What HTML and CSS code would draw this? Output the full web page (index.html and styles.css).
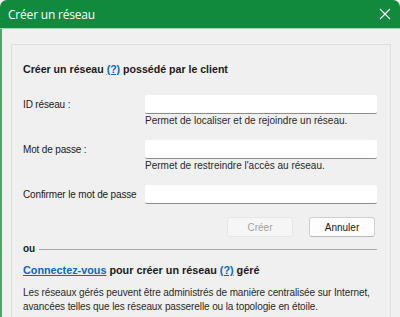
FILE: index.html
```html
<!DOCTYPE html>
<html>
<head>
    <title>Créer un réseau</title>
    <meta charset="UTF-8">
    <link rel="stylesheet" href="styles.css">
</head>
<body>
    <div class="window">
        <div class="titlebar">
            <span class="title">Créer un réseau</span>
            <svg class="close" width="12" height="12" viewBox="0 0 12 12">
                <path d="M1 1 L11 11 M11 1 L1 11" stroke="#fff" stroke-width="1.2" fill="none"/>
            </svg>
        </div>
        <div class="body">
            <div class="panel">
                <h3 class="heading">Créer un réseau <a href="#">(?)</a> possédé par le client</h3>

                <!-- formulaire réseau privé -->
                <div class="form-row first">
                    <label>ID réseau :</label>
                    <input type="text" id="networkId">
                </div>
                <div class="hint">Permet de localiser et de rejoindre un réseau.</div>
                <div class="form-row">
                    <label>Mot de passe :</label>
                    <input type="password" id="password">
                </div>
                <div class="hint">Permet de restreindre l'accès au réseau.</div>
                <div class="form-row">
                    <label>Confirmer le mot de passe</label>
                    <input type="password" id="confirm">
                </div>
                <div class="actions">
                    <button class="btn" disabled>Créer</button>
                    <button class="btn">Annuler</button>
                </div>

                <div class="separator"><span>ou</span><hr></div>

                <p class="managed"><a href="#">Connectez-vous</a> pour créer un réseau <a href="#">(?)</a> géré</p>
                <p class="desc">Les réseaux gérés peuvent être administrés de manière centralisée sur Internet,<br>avancées telles que les réseaux passerelle ou la topologie en étoile.</p>
            </div>
        </div>
    </div>
</body>
</html>
```

FILE: styles.css
```css
html, body {
    margin: 0;
    padding: 0;
    overflow: hidden;
}
body {
    font-family: "Liberation Sans", Arial, sans-serif;
    font-size: 10px;
    color: #1a1a1a;
    background-color: #f0f0f0;
}
.window {
    width: 400px;
    height: 317px;
    overflow: hidden;
}
.titlebar {
    height: 28px;
    background-color: #118a3e;
    border-radius: 7px 7px 0 0;
    border-bottom: 1px solid #9fd4b0;
    display: flex;
    align-items: center;
    justify-content: space-between;
    padding: 0 9px 0 8px;
}
.title {
    color: #fff;
    font-family: "Open Sans", sans-serif;
    font-size: 12px;
    letter-spacing: -0.2px;
}
.close {
    display: block;
}
.body {
    height: 288px;
    border-left: 2px solid #3fae68;
    padding: 15px 9px 0 9px;
    box-sizing: border-box;
}
.panel {
    border: 1px solid #dedede;
    border-bottom: none;
    height: 300px;
    padding: 17px 13px 0 11px;
    box-sizing: border-box;
}
.heading {
    margin: 0;
    font-size: 10.6px;
    line-height: 14px;
    font-weight: bold;
}
a {
    color: #0a66c8;
    text-decoration: underline;
}
.form-row {
    display: flex;
    align-items: center;
    margin-top: 13px;
}
.form-row.first {
    margin-top: 19px;
}
.form-row label {
    width: 122px;
    flex-shrink: 0;
    letter-spacing: -0.15px;
}
.form-row input {
    flex: 1;
    height: 19px;
    box-sizing: border-box;
    border: none;
    border-bottom: 1px solid #8c8c8c;
    background-color: #fff;
    border-radius: 2px;
    padding: 0 4px;
}
.hint {
    margin-left: 122px;
    margin-top: 1px;
    line-height: 12px;
    color: #2a2a2a;
}
.actions {
    display: flex;
    justify-content: flex-end;
    gap: 16px;
    margin-top: 13px;
    padding-right: 2px;
}
.btn {
    width: 66px;
    height: 20px;
    font-family: inherit;
    font-size: 10px;
    color: #1a1a1a;
    background-color: #fdfdfd;
    border: 1px solid #d0d0d0;
    border-bottom-color: #b8b8b8;
    border-radius: 3px;
}
.btn:disabled {
    color: #a0a0a0;
    background-color: #f6f6f6;
    border-color: #e6e6e6;
}
.separator {
    display: flex;
    align-items: center;
    gap: 4px;
    margin-top: 6px;
    font-weight: bold;
    line-height: 12px;
}
.separator hr {
    flex: 1;
    border: none;
    border-top: 1px solid #a8a8a8;
    margin: 0;
}
.managed {
    margin: 8px 0 0 0;
    font-size: 10.8px;
    font-weight: bold;
    line-height: 14px;
}
.desc {
    margin: 9px 0 0 0;
    line-height: 14px;
    color: #2a2a2a;
    font-size: 10px;
    letter-spacing: -0.1px;
    white-space: nowrap;
}
```
